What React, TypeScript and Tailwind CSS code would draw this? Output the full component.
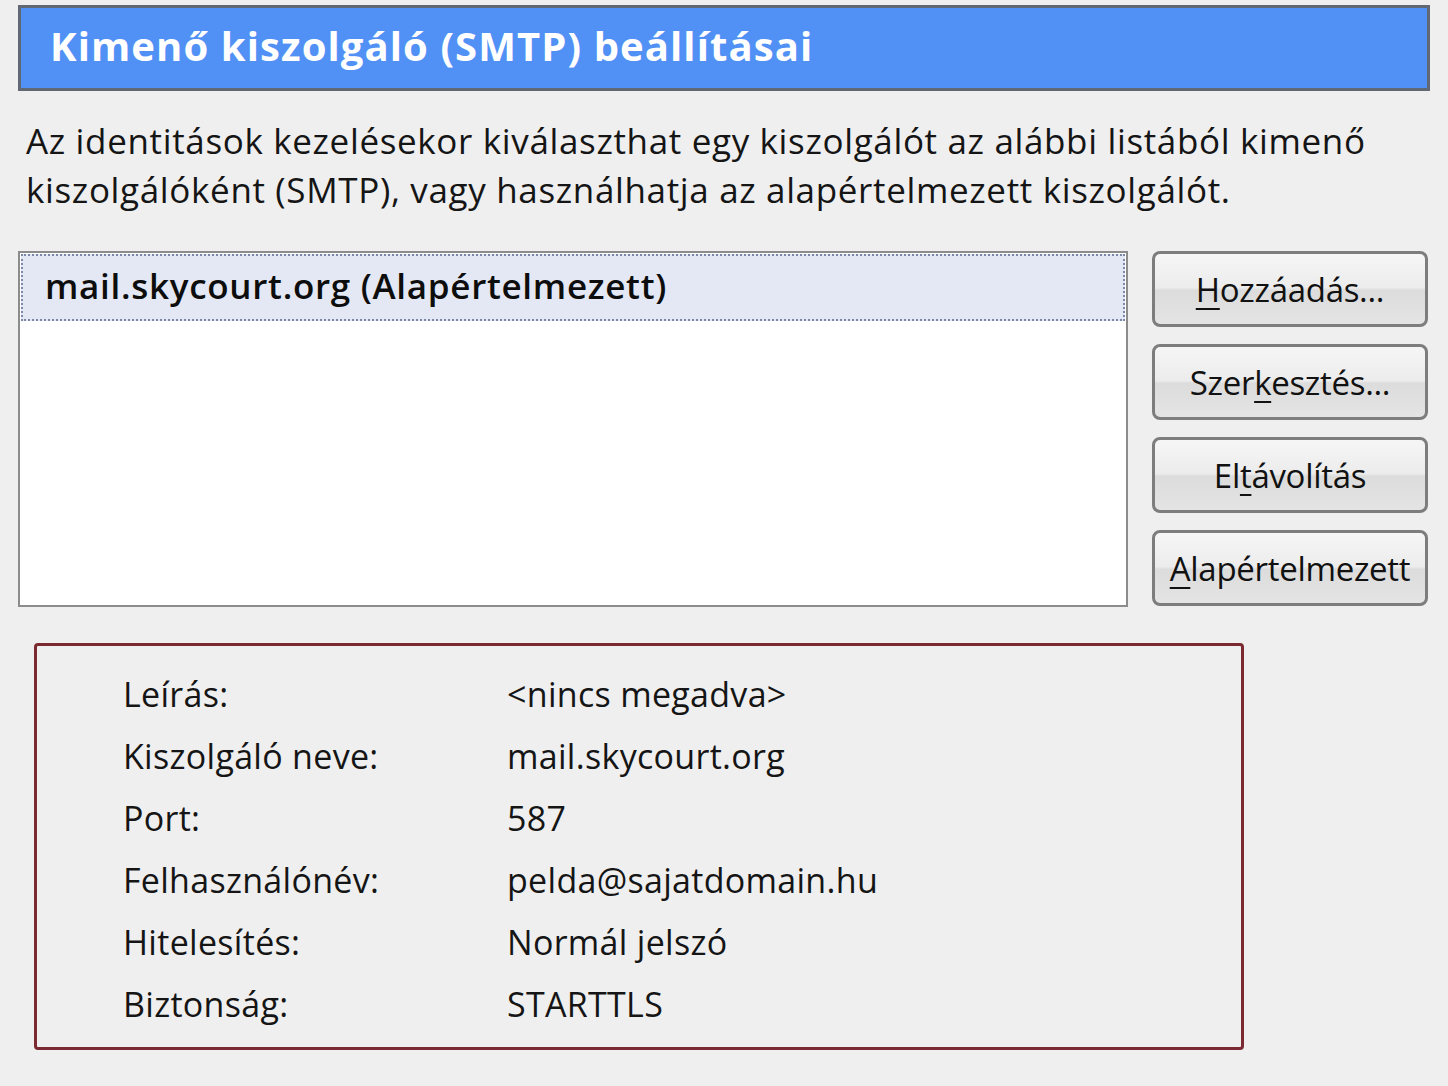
import React from "react"

const font = { fontFamily: '"Open Sans", "Noto Sans", "Liberation Sans", sans-serif' }

type Btn = { pre: string; key: string; post: string }

const buttons: Btn[] = [
	{ pre: "", key: "H", post: "ozzáadás..." },
	{ pre: "Szer", key: "k", post: "esztés..." },
	{ pre: "El", key: "t", post: "ávolítás" },
	{ pre: "", key: "A", post: "lapértelmezett" },
]

const details: [string, string][] = [
	["Leírás:", "<nincs megadva>"],
	["Kiszolgáló neve:", "mail.skycourt.org"],
	["Port:", "587"],
	["Felhasználónév:", "pelda@sajatdomain.hu"],
	["Hitelesítés:", "Normál jelszó"],
	["Biztonság:", "STARTTLS"],
]

function DialogButton({ b }: { b: Btn }) {
	return (
		<button className="h-[76px] w-full rounded-[8px] border-[3px] border-[#7d7d7d] bg-[linear-gradient(to_bottom,#f6f6f6_0%,#ececec_48%,#dcdcdc_52%,#e4e4e4_100%)] text-[33px] text-[#111] tracking-[-0.3px] pt-[2px]">
			{b.pre}
			<u className="underline decoration-[2px] underline-offset-[6px]">{b.key}</u>
			{b.post}
		</button>
	)
}

export default function App() {
	return (
		<div style={font} className="w-[1448px] h-[1086px] bg-[#efefef] pt-[5px] overflow-hidden text-[#151515]">
			<div className="mx-[18px] h-[86px] border-[3px] border-[#5f6873] bg-[#5191f5] pl-[29px] flex items-center">
				<h1 className="text-[40px] font-bold text-white tracking-[1.1px] pb-[4px]">Kimenő kiszolgáló (SMTP) beállításai</h1>
			</div>

			<p className="ml-[26px] mt-[25px] text-[35px] leading-[49px] tracking-[0.65px]">
				Az identitások kezelésekor kiválaszthat egy kiszolgálót az alábbi listából kimenő
				<br />
				kiszolgálóként (SMTP), vagy használhatja az alapértelmezett kiszolgálót.
			</p>

			<div className="flex gap-[24px] ml-[18px] mr-[20px] mt-[37px]">
				<div className="w-[1110px] h-[356px] border-[2px] border-[#8c8c8c] bg-white p-[1px]">
					<div className="h-[67px] border-[2px] border-dotted border-[#7b88a8] bg-[#e3e8f4] pl-[22px] flex items-center">
						<span className="text-[35px] font-semibold tracking-[0.7px] text-[#0d0d0d] pb-[2px]">mail.skycourt.org (Alapértelmezett)</span>
					</div>
				</div>
				<div className="flex-1 flex flex-col gap-[17px]">
					{buttons.map(b => (
						<DialogButton key={b.pre + b.key} b={b} />
					))}
				</div>
			</div>

			<div className="ml-[34px] mt-[36px] w-[1210px] h-[407px] border-[3px] border-[#7b2a31] rounded-[4px] pt-[17px] pl-[86px]">
				{details.map(([label, value]) => (
					<div key={label} className="flex h-[62px] items-center text-[34px] tracking-[0.3px]">
						<span className="w-[384px]">{label}</span>
						<span>{value}</span>
					</div>
				))}
			</div>
		</div>
	)
}
